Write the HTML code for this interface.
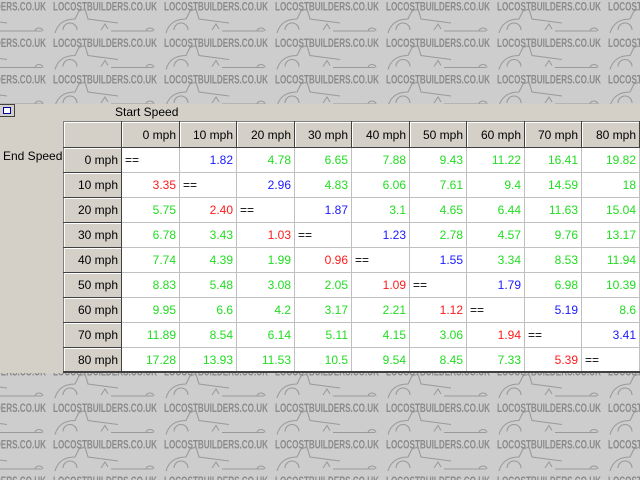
<!DOCTYPE html>
<html><head><style>
*{margin:0;padding:0;box-sizing:border-box}
body{width:640px;height:480px;overflow:hidden;background:#cdcdcd;font-family:"Liberation Sans",sans-serif;position:relative}
#bg{position:absolute;left:0;top:0}
#panel{position:absolute;left:0;top:104px;width:640px;height:269px;background:#d4d0c8}
.lbl{position:absolute;font-size:12px;color:#000}
table{position:absolute;left:63px;top:121px;border-collapse:collapse;font-size:12px;table-layout:fixed;border-left:1px solid #808080;border-top:1px solid #808080}
td{height:25px;padding:0 3px;text-align:right;white-space:nowrap;background:#fff;border-right:1px solid #c0c0c0;border-bottom:1px solid #c0c0c0}
td.h{background:#d4d0c8;border-right:1px solid #404040;border-bottom:1px solid #404040;box-shadow:inset 1px 1px 0 #fff;color:#000}
td.e{text-align:left}
.g{color:#22dd22}.r{color:#ff1a1a}.b{color:#1a1aff}
tr.hr td{height:26px}
</style></head><body>
<svg id="bg" width="640" height="480">
<defs><pattern id="p" x="53" y="0" width="111" height="36.5" patternUnits="userSpaceOnUse">
<text x="0" y="10.5" fill="#8a8a8a" font-family="Liberation Sans" font-weight="bold" font-size="12" textLength="104" lengthAdjust="spacingAndGlyphs">LOCOSTBUILDERS.CO.UK</text>
<g fill="none" stroke="#9a9a9a" stroke-width="1.1">
<path d="M-53 31 H-15 M-18 31 a4 3 0 1 1 8 0 M2 33 q4 -14 20 -14 l4 -8 l6 -2 l3 10 l30 4 M10 30 a7 7 0 0 1 14 0 M48 30 l4 -6 l3 5 M58 31 H100"/>
<path transform="translate(111 0)" d="M-53 31 H-15 M-18 31 a4 3 0 1 1 8 0"/>
<path transform="translate(0 -36.5)" d="M-53 31 H-15 M-18 31 a4 3 0 1 1 8 0 M2 33 q4 -14 20 -14 l4 -8 l6 -2 l3 10 l30 4 M10 30 a7 7 0 0 1 14 0 M48 30 l4 -6 l3 5 M58 31 H100"/>
<path transform="translate(0 36.5)" d="M2 33 q4 -14 20 -14 l4 -8 l6 -2 l3 10 M10 30 a7 7 0 0 1 14 0"/>
</g>
</pattern></defs>
<rect width="640" height="480" fill="url(#p)"/>
</svg>
<div id="panel"></div>
<div style="position:absolute;left:0;top:104px;width:15px;height:13px;background:#d4d0c8;border:1px solid #404040;border-left:none"><div style="margin:2px 3px;width:8px;height:7px;border:1px solid #0000a0;background:#fff"></div></div>
<div class="lbl" style="left:115px;top:105px">Start Speed</div>
<div class="lbl" style="left:3px;top:149px">End Speed</div>
<table>
<colgroup><col style="width:58px"><col style="width:58px"><col style="width:57px"><col style="width:58px"><col style="width:57px"><col style="width:58px"><col style="width:57px"><col style="width:58px"><col style="width:57px"><col style="width:58px"></colgroup>
<tr class="hr"><td class="h"></td><td class="h">0 mph</td><td class="h">10 mph</td><td class="h">20 mph</td><td class="h">30 mph</td><td class="h">40 mph</td><td class="h">50 mph</td><td class="h">60 mph</td><td class="h">70 mph</td><td class="h">80 mph</td></tr>
<tr><td class="h">0 mph</td><td class="e">==</td><td class="b">1.82</td><td class="g">4.78</td><td class="g">6.65</td><td class="g">7.88</td><td class="g">9.43</td><td class="g">11.22</td><td class="g">16.41</td><td class="g">19.82</td></tr>
<tr><td class="h">10 mph</td><td class="r">3.35</td><td class="e">==</td><td class="b">2.96</td><td class="g">4.83</td><td class="g">6.06</td><td class="g">7.61</td><td class="g">9.4</td><td class="g">14.59</td><td class="g">18</td></tr>
<tr><td class="h">20 mph</td><td class="g">5.75</td><td class="r">2.40</td><td class="e">==</td><td class="b">1.87</td><td class="g">3.1</td><td class="g">4.65</td><td class="g">6.44</td><td class="g">11.63</td><td class="g">15.04</td></tr>
<tr><td class="h">30 mph</td><td class="g">6.78</td><td class="g">3.43</td><td class="r">1.03</td><td class="e">==</td><td class="b">1.23</td><td class="g">2.78</td><td class="g">4.57</td><td class="g">9.76</td><td class="g">13.17</td></tr>
<tr><td class="h">40 mph</td><td class="g">7.74</td><td class="g">4.39</td><td class="g">1.99</td><td class="r">0.96</td><td class="e">==</td><td class="b">1.55</td><td class="g">3.34</td><td class="g">8.53</td><td class="g">11.94</td></tr>
<tr><td class="h">50 mph</td><td class="g">8.83</td><td class="g">5.48</td><td class="g">3.08</td><td class="g">2.05</td><td class="r">1.09</td><td class="e">==</td><td class="b">1.79</td><td class="g">6.98</td><td class="g">10.39</td></tr>
<tr><td class="h">60 mph</td><td class="g">9.95</td><td class="g">6.6</td><td class="g">4.2</td><td class="g">3.17</td><td class="g">2.21</td><td class="r">1.12</td><td class="e">==</td><td class="b">5.19</td><td class="g">8.6</td></tr>
<tr><td class="h">70 mph</td><td class="g">11.89</td><td class="g">8.54</td><td class="g">6.14</td><td class="g">5.11</td><td class="g">4.15</td><td class="g">3.06</td><td class="r">1.94</td><td class="e">==</td><td class="b">3.41</td></tr>
<tr><td class="h" style="height:23px">80 mph</td><td class="g">17.28</td><td class="g">13.93</td><td class="g">11.53</td><td class="g">10.5</td><td class="g">9.54</td><td class="g">8.45</td><td class="g">7.33</td><td class="r">5.39</td><td class="e">==</td></tr>
</table>
<div style="position:absolute;left:63px;top:371px;width:577px;height:2px;background:#404040"></div>
</body></html>
